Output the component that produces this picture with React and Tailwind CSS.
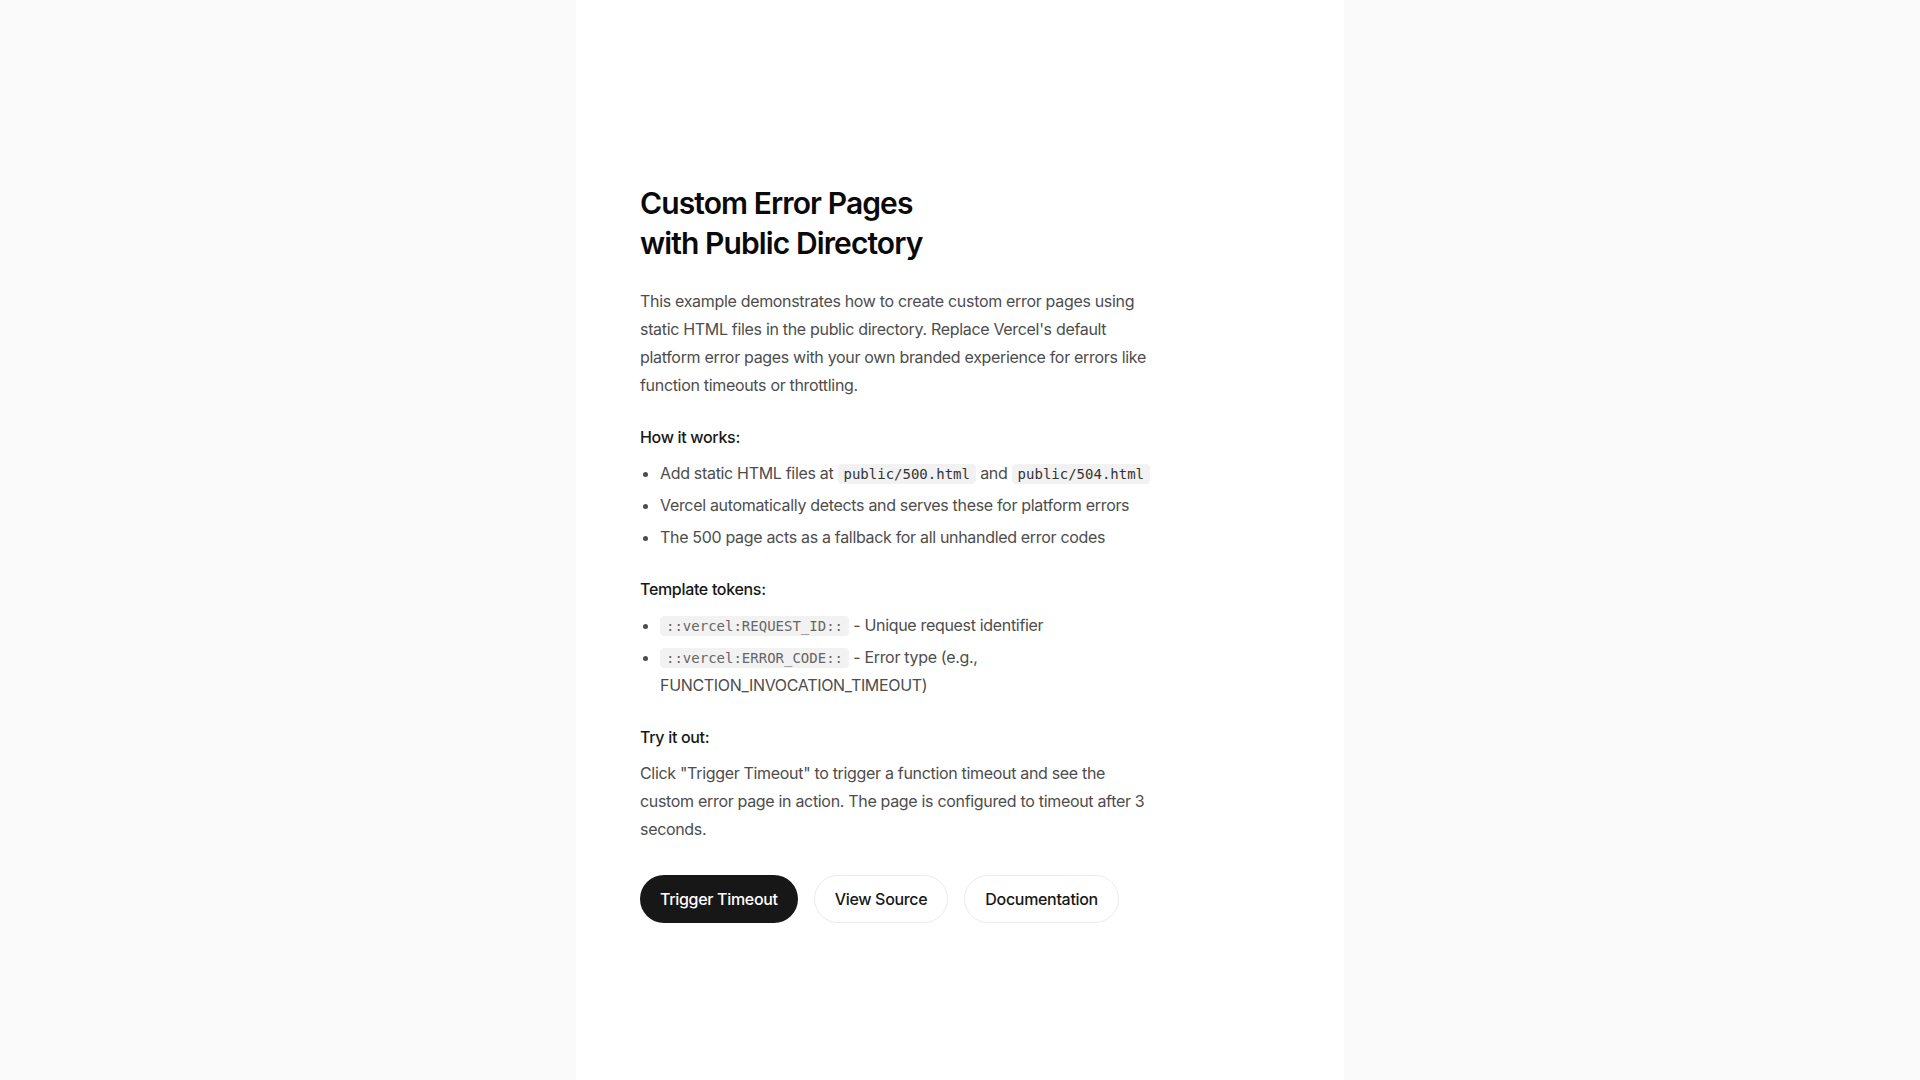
const Code = ({ children, muted }) => (
  <code
    className={
      muted
        ? 'rounded bg-[#f2f2f2] px-1.5 py-0.5 font-["DejaVu_Sans_Mono",monospace] text-sm tracking-normal text-[#666]'
        : 'rounded bg-[#f2f2f2] px-1.5 py-0.5 font-["DejaVu_Sans_Mono",monospace] text-sm tracking-normal text-[#333]'
    }
  >
    {children}
  </code>
);

export default function App() {
  return (
    <div className="min-h-screen bg-[#fafafa] font-['Inter',sans-serif]">
      <main className="mx-auto min-h-screen w-[768px] bg-white px-16 pt-[183px] pb-32">
        <div className="max-w-lg tracking-[-0.02em]">
          <h1 className="text-3xl font-semibold leading-10 tracking-[-0.03em] text-[#0a0a0a]">
            Custom Error Pages
            <br />
            with Public Directory
          </h1>

          <p className="mt-6 text-base leading-7 text-[#4d4d4d]">
            This example demonstrates how to create custom error pages using static HTML files in the
            public directory. Replace Vercel's default platform error pages with your own branded
            experience for errors like function timeouts or throttling.
          </p>

          <h2 className="mt-6 text-base font-medium leading-7 text-[#171717]">How it works:</h2>
          <ul className="mt-2 list-disc space-y-1 pl-5 text-base leading-7 text-[#4d4d4d]">
            <li>
              Add static HTML files at <Code>public/500.html</Code> and <Code>public/504.html</Code>
            </li>
            <li>Vercel automatically detects and serves these for platform errors</li>
            <li>The 500 page acts as a fallback for all unhandled error codes</li>
          </ul>

          <h2 className="mt-6 text-base font-medium leading-7 text-[#171717]">Template tokens:</h2>
          <ul className="mt-2 list-disc space-y-1 pl-5 text-base leading-7 text-[#4d4d4d]">
            <li>
              <Code muted>::vercel:REQUEST_ID::</Code> - Unique request identifier
            </li>
            <li>
              <Code muted>::vercel:ERROR_CODE::</Code> - Error type (e.g., FUNCTION_INVOCATION_TIMEOUT)
            </li>
          </ul>

          <h2 className="mt-6 text-base font-medium leading-7 text-[#171717]">Try it out:</h2>
          <p className="mt-2 text-base leading-7 text-[#4d4d4d]">
            Click "Trigger Timeout" to trigger a function timeout and see the custom error page in
            action. The page is configured to timeout after 3 seconds.
          </p>

          <div className="mt-8 flex gap-4">
            <button className="h-12 rounded-full bg-[#171717] px-5 text-base font-medium text-white">
              Trigger Timeout
            </button>
            <button className="h-12 rounded-full border border-[#ebebeb] bg-white px-5 text-base font-medium text-[#171717]">
              View Source
            </button>
            <button className="h-12 rounded-full border border-[#ebebeb] bg-white px-5 text-base font-medium text-[#171717]">
              Documentation
            </button>
          </div>
        </div>
      </main>
    </div>
  );
}
